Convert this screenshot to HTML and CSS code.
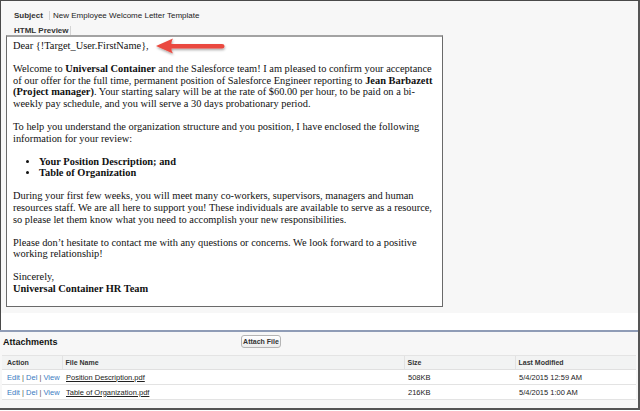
FILE: index.html
```html
<!DOCTYPE html>
<html>
<head>
<meta charset="utf-8">
<link rel="stylesheet" href="styles.css">
</head>
<body>
<div class="frame">
  <section class="detail">
    <div class="field-row subject-row">
      <span class="field-label">Subject</span>
      <span class="field-sep"></span>
      <span class="field-value">New Employee Welcome Letter Template</span>
    </div>
    <div class="field-row preview-row">
      <span class="field-label">HTML Preview</span>
      <span class="field-sep"></span>
    </div>
    <div class="preview">
      <p class="first">Dear {!Target_User.FirstName},</p>
      <p>Welcome to <b>Universal Container</b> and the Salesforce team! I am pleased to confirm your acceptance of our offer for the full time, permanent position of Salesforce Engineer reporting to <b>Jean Barbazett (Project manager)</b>. Your starting salary will be at the rate of $60.00 per hour, to be paid on a bi-weekly pay schedule, and you will serve a 30 days probationary period.</p>
      <p>To help you understand the organization structure and you position, I have enclosed the following information for your review:</p>
      <ul>
        <li><b>Your Position Description; and</b></li>
        <li><b>Table of Organization</b></li>
      </ul>
      <p>During your first few weeks, you will meet many co-workers, supervisors, managers and human resources staff. We are all here to support you! These individuals are available to serve as a resource, so please let them know what you need to accomplish your new responsibilities.</p>
      <p>Please don’t hesitate to contact me with any questions or concerns. We look forward to a positive working relationship!</p>
      <p>Sincerely,<br><b>Universal Container HR Team</b></p>
      <svg class="arrow" width="74" height="22" viewBox="0 0 74 22">
        <defs>
          <filter id="sh" x="-20%" y="-40%" width="140%" height="180%">
            <feDropShadow dx="0.5" dy="1.5" stdDeviation="1" flood-color="#000" flood-opacity="0.35"/>
          </filter>
        </defs>
        <g filter="url(#sh)" fill="#ea4a40">
          <path d="M2 10 L19 2.5 Q17 6.5 17.5 8 L68 8 Q70.5 8 70.5 10 Q70.5 12.5 68 12.5 L17.5 12.5 Q17 14 19 17.5 Z"/>
        </g>
      </svg>
    </div>
  </section>
  <div class="gap-strip"></div>
  <section class="attachments">
    <div class="att-head">
      <h2 class="att-title">Attachments</h2>
      <button class="btn">Attach File</button>
    </div>
    <table class="att-table">
      <colgroup>
        <col class="c-action"><col class="c-name"><col class="c-size"><col class="c-date">
      </colgroup>
      <thead>
        <tr><th>Action</th><th>File Name</th><th>Size</th><th>Last Modified</th></tr>
      </thead>
      <tbody>
        <tr>
          <td class="actions"><a>Edit</a> | <a>Del</a> | <a>View</a></td>
          <td><a class="file">Position Description.pdf</a></td>
          <td>508KB</td>
          <td>5/4/2015 12:59 AM</td>
        </tr>
        <tr>
          <td class="actions"><a>Edit</a> | <a>Del</a> | <a>View</a></td>
          <td><a class="file">Table of Organization.pdf</a></td>
          <td>216KB</td>
          <td>5/4/2015 1:00 AM</td>
        </tr>
      </tbody>
    </table>
  </section>
</div>
</body>
</html>
```
FILE: styles.css
```css
* { box-sizing: border-box; }
html, body { margin: 0; padding: 0; background: #fff; }
body { width: 640px; height: 411px; overflow: hidden; font-family: "Liberation Sans", Arial, sans-serif; }

.frame {
  width: 640px;
  height: 410px;
  border-top: 1px solid #4a4a4a;
  border-right: 2px solid #555;
  border-bottom: 2px solid #555;
  background: #fff;
  display: flex;
  flex-direction: column;
}

.detail {
  background: #f7f7f7;
  border-left: 1px solid #4a4a4a;
  padding: 9px 0 5px 0;
  height: 312px;
}

.field-row {
  display: flex;
  align-items: center;
  padding-left: 13px;
  font-size: 8px;
  color: #333;
  white-space: nowrap;
}
.subject-row { height: 10px; margin-bottom: 6px; }
.preview-row { height: 9px; }
.field-label { font-weight: bold; color: #333; }
.subject-row .field-label { width: 35px; }
.preview-row .field-label { width: 56px; }
.field-sep { width: 1px; height: 9px; background: #d4d4d4; margin-right: 3px; }
.field-value { color: #222; }

.preview {
  position: relative;
  margin-left: 5px;
  width: 437px;
  background: #fff;
  border: 1px solid #6a6a6a;
  border-top: 2px solid #a3a3a3;
  padding: 3px 4px 0 6px;
  font-family: "Liberation Serif", "Times New Roman", serif;
  font-size: 10.4px;
  line-height: 11.8px;
  color: #111;
}
.preview p { margin: 11px 0; }
.preview p.first { margin-top: 0; }
.preview ul { margin: 11px 0; padding-left: 26px; }
.preview li { margin: 0; }

.arrow { position: absolute; left: 147px; top: -1px; }

.gap-strip { height: 17px; background: #fff; border-left: 1px solid #4a4a4a; }

.attachments {
  flex: 1;
  background: #f7f7f7;
  border-top: 2px solid #8f9cb6;
  display: flex;
  flex-direction: column;
}
.att-head {
  display: flex;
  align-items: center;
  height: 23px;
  padding-left: 3px;
  padding-bottom: 4px;
}
.att-title {
  margin: 0;
  width: 238px;
  font-size: 9px;
  font-weight: bold;
  color: #111;
}
.btn {
  font-family: "Liberation Sans", Arial, sans-serif;
  font-size: 7px;
  font-weight: bold;
  color: #333;
  height: 13px;
  width: 40px;
  padding: 0;
  white-space: nowrap;
  border: 1px solid #b5b5b5;
  border-radius: 3px;
  background: linear-gradient(#ffffff, #ececec);
}

.att-table {
  margin-left: 2px;
  width: 634px;
  border-collapse: collapse;
  table-layout: fixed;
  font-size: 7.5px;
  color: #222;
}
.c-action { width: 60px; }
.c-name { width: 342px; }
.c-size { width: 111px; }
.c-date { width: 121px; }
.att-table th {
  height: 14px;
  text-align: left;
  font-weight: bold;
  font-size: 7px;
  color: #333;
  background: #f2f3f3;
  border-top: 1px solid #e4e4e4;
  border-bottom: 1px solid #e0e0e0;
  border-left: 1px solid #e2e2e2;
  padding: 0 3px;
}
.att-table th:first-child { border-left: none; padding-left: 5px; }
.att-table td {
  height: 15px;
  background: #fff;
  border-bottom: 1px solid #e3e3e3;
  padding: 0 4px 0 4px;
  white-space: nowrap;
}
.att-table td.actions { padding-left: 5px; padding-right: 0; }
.actions { color: #555; }
.actions a { color: #3a7cc2; }
.file { color: #222; text-decoration: underline; }
```
